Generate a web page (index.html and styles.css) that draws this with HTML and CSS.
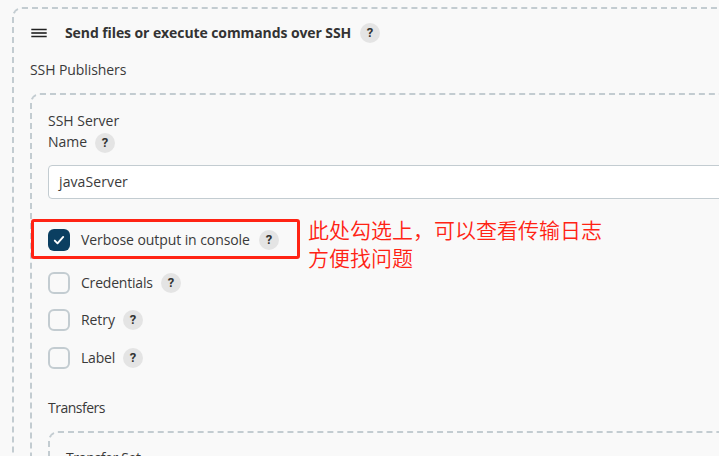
FILE: index.html
```html
<!DOCTYPE html>
<html lang="zh">
<head>
<meta charset="utf-8">
<title>SSH Publishers</title>
<link rel="stylesheet" href="styles.css">
</head>
<body>
<main class="chunk builder">
  <header class="builder-head">
    <svg class="grip" width="16" height="10" viewBox="0 0 16 10"><path d="M.3 1.5h15.4M.3 8.5h15.4" stroke="#222" stroke-width="1.3"/><path d="M.3 5h15.4" stroke="#4a4a4a" stroke-width="2"/></svg>
    <b class="builder-title">Send files or execute commands over SSH</b>
    <span class="help">?</span>
  </header>
  <div class="section-label"><span class="t-publishers">SSH Publishers</span></div>
  <section class="chunk publisher">
    <div class="line"><span class="t-server">SSH Server</span></div>
    <div class="line"><span class="t-name">Name</span><span class="help help-name">?</span></div>
    <div class="select"><span class="t-java">javaServer</span></div>
    <div class="option verbose">
      <span class="box checked"><svg width="22" height="22" viewBox="0 0 22 22"><path d="M6.8 11.6l2.7 2.7 5.7-6.4" fill="none" stroke="#fff" stroke-width="1.9" stroke-linecap="round" stroke-linejoin="round"/></svg></span>
      <span class="t-verbose">Verbose output in console</span><span class="help">?</span>
      <div class="highlight"></div>
      <p class="note">此处勾选上，可以查看传输日志<br>方便找问题</p>
    </div>
    <div class="option credentials"><span class="box"></span><span class="t-credentials">Credentials</span><span class="help">?</span></div>
    <div class="option retry"><span class="box"></span><span class="t-retry">Retry</span><span class="help">?</span></div>
    <div class="option label"><span class="box"></span><span class="t-label">Label</span><span class="help">?</span></div>
    <div class="transfers"><span class="t-transfers">Transfers</span></div>
    <section class="chunk transfer"><span class="t-set">Transfer Set</span></section>
  </section>
</main>
</body>
</html>
```
FILE: styles.css
```css
* { box-sizing: border-box; }
body {
  margin: 0;
  height: 456px;
  overflow: hidden;
  background: #f9f9f9;
  color: #3a3a3a;
  font: 14px/20px "Open Sans", "Noto Sans", sans-serif;
  letter-spacing: -.08px;
  white-space: nowrap;
}
.chunk { border: 2px dashed #c3ccd1; border-radius: 10px; }
.builder { width: 800px; height: 540px; margin: 7px 0 0 12px; padding: 14px 16px; }
.builder-head { display: flex; align-items: center; height: 20px; padding-left: 1px; }
.grip { width: 16px; margin-right: 18px; }
.builder-title { width: 295px; color: #333; font-weight: 700; letter-spacing: -.09px; }
.help {
  flex: none;
  width: 20px;
  height: 20px;
  border-radius: 50%;
  background: #e4e4e4;
  color: #333;
  font: 700 13px/20px Roboto, sans-serif;
  letter-spacing: 0;
  text-align: center;
}
.section-label { display: flex; margin-top: 17px; height: 33px; }
.publisher { width: 760px; height: 440px; padding: 15px 16px; }
.line { display: flex; align-items: center; height: 21px; }
.t-server { letter-spacing: 0; }
.t-name { width: 47px; letter-spacing: 0; }
.help-name { position: relative; top: 1px; }
.select {
  display: flex;
  align-items: center;
  height: 34px;
  margin-top: 13px;
  padding: 0 10px 1px;
  border: 1px solid #c3ccd1;
  border-radius: 4px;
  background: #fff;
}
.t-java { letter-spacing: .1px; }
.option { display: flex; align-items: center; height: 22px; }
.box { flex: none; width: 22px; height: 22px; margin-right: 11px; border: 2px solid #c3ccd1; border-radius: 6px; }
.checked { border: 0; background: #0b3f61; }
.checked svg { display: block; }
.verbose { position: relative; margin-top: 30px; }
.t-verbose { width: 178px; }
.credentials { margin-top: 21px; }
.t-credentials { width: 80px; letter-spacing: -.2px; }
.retry { margin-top: 15px; }
.label { margin-top: 16px; }
.t-retry, .t-label { width: 42px; }
.t-label { letter-spacing: -.2px; }
.transfers { margin-top: 29px; height: 33px; }
.t-transfers { letter-spacing: -.5px; }
.transfer { width: 720px; height: 100px; padding: 15px 16px; letter-spacing: -.35px; }
.highlight { position: absolute; left: -17px; top: -10px; width: 269px; height: 40px; border: 3px solid #ff2314; border-radius: 3px; }
.note {
  position: absolute;
  left: 260px;
  top: -14px;
  margin: 0;
  color: #ff2314;
  font: 350 21px/28px "Noto Sans CJK SC", sans-serif;
  letter-spacing: 0;
}
```
